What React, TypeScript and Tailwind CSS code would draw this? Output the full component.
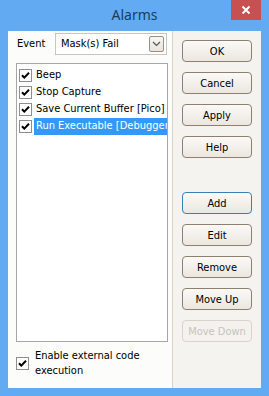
import React from "react";

const F = { fontFamily: '"DejaVu Sans Condensed","DejaVu Sans","Liberation Sans",sans-serif' };

function Check({ className = "" }: { className?: string }) {
  return (
    <div className={"w-[13px] h-[13px] bg-white border border-[#8f8f8f] flex items-center justify-center shrink-0 " + className}>
      <svg width="11" height="11" viewBox="0 0 11 11">
        <path d="M2 5.2 L4.3 7.6 L9 2.8" fill="none" stroke="#000" strokeWidth="2" />
      </svg>
    </div>
  );
}

function Btn({ label, variant = "normal" }: { label: string; variant?: "normal" | "default" | "disabled" }) {
  const border =
    variant === "default"
      ? "border-[#3c7fb1]"
      : variant === "disabled"
      ? "border-[#d8d4cc]"
      : "border-[#8d8070]";
  const text = variant === "disabled" ? "text-[#c7c3bb]" : "text-black";
  const bg =
    variant === "disabled"
      ? "bg-[#f4f2ee]"
      : "bg-gradient-to-b from-[#fbfaf8] to-[#ebe7df]";
  return (
    <div
      className={`w-[70px] h-[22px] rounded-[4px] border ${border} ${bg} ${text} flex items-center justify-center text-[11px] leading-none`}
      style={F}
    >
      {label}
    </div>
  );
}

export default function App() {
  const items = ["Beep", "Stop Capture", "Save Current Buffer [Pico]", "Run Executable [Debugger]"];
  return (
    <div className="w-[269px] h-[396px] bg-[#62abf2] flex flex-col overflow-hidden">
      <div className="h-[31px] relative flex items-center justify-center">
        <span
          className="text-[14px] text-[#1d3b5e] leading-none -mt-[1px]"
          style={{ fontFamily: '"Noto Sans","Open Sans",sans-serif' }}
        >
          Alarms
        </span>
        <div className="absolute right-[8px] top-0 w-[30px] h-[20px] bg-[#c75050] flex items-center justify-center">
          <svg width="10" height="10" viewBox="0 0 10 10">
            <path d="M1.5 1.5 L8.5 8.5 M8.5 1.5 L1.5 8.5" stroke="#fff" strokeWidth="2" />
          </svg>
        </div>
      </div>
      <div className="mx-[8px] mb-[8px] flex-1 flex" style={F}>
        <div className="w-[165px] bg-[#fcfcfb] border-r border-[#d9d5cd] flex flex-col pt-[2px]">
          <div className="flex items-center h-[22px]">
            <span className="pl-[9px] w-[47px] text-[11px] text-black">Event</span>
            <div className="w-[112px] h-[22px] border border-[#c9c6c0] bg-white flex items-center">
              <span className="pl-[5px] flex-1 text-[11px] text-black">Mask(s) Fail</span>
              <div className="w-[15px] h-[16px] mr-[2px] rounded-[2px] border border-[#9a9186] bg-gradient-to-b from-[#f8f7f4] to-[#e8e4dc] flex items-center justify-center">
                <svg width="9" height="6" viewBox="0 0 9 6">
                  <path d="M1 1 L4.5 4.5 L8 1" fill="none" stroke="#555" strokeWidth="1.2" />
                </svg>
              </div>
            </div>
          </div>
          <div className="ml-[8px] mt-[8px] w-[152px] h-[279px] border border-[#a6a6a6] bg-white pt-[3px]">
            {items.map((t, i) => (
              <div key={t} className="h-[17px] flex items-center">
                <Check className="ml-[2px]" />
                <div
                  className={`ml-[2px] flex-1 h-[17px] flex items-center pl-[2px] text-[11px] whitespace-nowrap overflow-hidden ${
                    i === 3 ? "bg-[#3399ff] text-white" : "text-black"
                  }`}
                >
                  {t}
                </div>
              </div>
            ))}
          </div>
          <div className="flex items-center ml-[8px] mt-[6px]">
            <Check />
            <div className="ml-[6px] text-[11px] leading-[15px] text-black">
              Enable external code
              <br />
              execution
            </div>
          </div>
        </div>
        <div className="flex-1 bg-[#f4f3ef] flex flex-col pl-[9px] pt-[9px] gap-[10px]">
          <Btn label="OK" />
          <Btn label="Cancel" />
          <Btn label="Apply" />
          <Btn label="Help" />
          <div className="h-[14px]" />
          <Btn label="Add" variant="default" />
          <Btn label="Edit" />
          <Btn label="Remove" />
          <Btn label="Move Up" />
          <Btn label="Move Down" variant="disabled" />
        </div>
      </div>
    </div>
  );
}
